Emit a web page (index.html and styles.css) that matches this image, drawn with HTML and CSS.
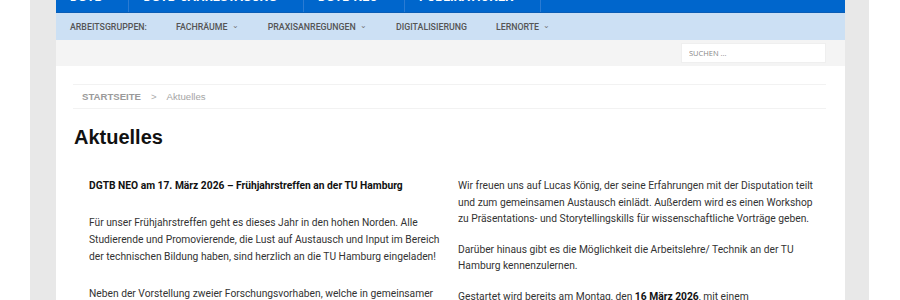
FILE: index.html
```html
<!DOCTYPE html>
<html lang="de">
<head>
  <meta charset="UTF-8" />
  <title>Aktuelles</title>
  <link rel="stylesheet" href="styles.css">
</head>
<body>

  <div class="wrapper">
    <div class="page">
      <!-- Hauptmenü -->
      <nav class="main-nav">
        <a class="main-item first">DGTB</a>
        <a class="main-item">DGTB-JAHRESTAGUNG</a>
        <a class="main-item">DGTB NEO</a>
        <a class="main-item">PUBLIKATIONEN</a>
      </nav>

      <!-- Arbeitsgruppen -->
      <nav class="sub-nav">
        <span class="sub-item label">ARBEITSGRUPPEN:</span>
        <span class="sub-item">FACHRÄUME <span class="caret">&#8964;</span></span>
        <span class="sub-item">PRAXISANREGUNGEN <span class="caret">&#8964;</span></span>
        <span class="sub-item">DIGITALISIERUNG</span>
        <span class="sub-item">LERNORTE <span class="caret">&#8964;</span></span>
      </nav>

      <div class="search-bar">
        <input class="search" type="text" placeholder="SUCHEN ...">
      </div>

      <div class="content">
        <div class="breadcrumb">
          <span class="crumb-home">STARTSEITE</span>
          <span class="crumb-sep">&gt;</span>
          <span class="crumb-current">Aktuelles</span>
        </div>

        <h1>Aktuelles</h1>

        <div class="columns">
          <div class="col col-left">
            <p><strong>DGTB NEO am 17. März 2026 – Frühjahrstreffen an der TU Hamburg</strong></p>
            <p>Für unser Frühjahrstreffen geht es dieses Jahr in den hohen Norden. Alle Studierende und Promovierende, die Lust auf Austausch und Input im Bereich der technischen Bildung haben, sind herzlich an die TU Hamburg eingeladen!</p>
            <p>Neben der Vorstellung zweier Forschungsvorhaben, welche in gemeinsamer Arbeit entstanden sind, gibt es viel Zeit zum Austausch.</p>
          </div>
          <div class="col col-right">
            <p>Wir freuen uns auf Lucas König, der seine Erfahrungen mit der Disputation teilt und zum gemeinsamen Austausch einlädt. Außerdem wird es einen Workshop zu Präsentations- und Storytellingskills für wissenschaftliche Vorträge geben.</p>
            <p>Darüber hinaus gibt es die Möglichkeit die Arbeitslehre/ Technik an der TU Hamburg kennenzulernen.</p>
            <p>Gestartet wird bereits am Montag, den <strong>16 März 2026</strong>, mit einem Willkommensabend in Hamburg.</p>
          </div>
        </div>
      </div>
    </div>
  </div>

</body>
</html>
```

FILE: styles.css
```css
* {
  box-sizing: border-box;
}
body {
  font-family: 'Roboto', 'Liberation Sans', sans-serif;
  margin: 0;
  padding: 0;
  background-color: #ffffff;
  overflow: hidden;
}
.wrapper {
  width: 839px;
  margin-left: 30px;
  padding: 0 24px 0 26px;
  background-color: #e8e8e8;
  height: 300px;
  overflow: hidden;
}
.page {
  background-color: #ffffff;
  height: 100%;
}

/* Hauptmenü (oben abgeschnitten) */
.main-nav {
  display: flex;
  height: 13px;
  background-color: #0066cc;
  border-bottom: 1px solid #0a5db5;
  overflow: hidden;
}
.main-item {
  display: block;
  margin-top: -11px;
  padding: 0 26px 0 14px;
  font-family: 'Roboto', sans-serif;
  font-size: 12.5px;
  font-weight: bold;
  line-height: 16px;
  color: #ffffff;
  border-right: 1px solid #2a7bd3;
  height: 30px;
}

/* Arbeitsgruppen */
.sub-nav {
  display: flex;
  align-items: center;
  height: 27px;
  padding-left: 14px;
  background-color: #cce0f4;
}
.sub-item {
  font-size: 8.8px;
  font-weight: 500;
  color: #555555;
  margin-right: 29px;
  white-space: nowrap;
}
.caret {
  font-size: 8px;
  position: relative;
  top: -2px;
  margin-left: 2px;
  color: #777777;
}

.search-bar {
  display: flex;
  justify-content: flex-end;
  align-items: center;
  height: 26px;
  padding-right: 19px;
  background-color: #f4f4f4;
}
.search {
  width: 145px;
  height: 20px;
  border: 1px solid #efefef;
  background-color: #ffffff;
  padding: 0 7px;
  font-family: 'Open Sans', sans-serif;
  font-size: 7.5px;
  outline: none;
}
.search::placeholder {
  color: #888888;
}

.content {
  padding: 18px 19px 0 17px;
}
.breadcrumb {
  height: 25px;
  border-top: 1px solid #f2f2f2;
  border-bottom: 1px solid #f2f2f2;
  padding-left: 9px;
  display: flex;
  align-items: center;
  font-family: 'Liberation Sans', Arial, sans-serif;
  font-size: 9.6px;
}
.crumb-home {
  font-weight: bold;
  color: #9a9a9a;
}
.crumb-sep {
  color: #aaaaaa;
  margin: 0 10px;
}
.crumb-current {
  color: #a5a5a5;
}

h1 {
  margin: 16px 0 0 1px;
  font-family: 'Liberation Sans', Arial, sans-serif;
  font-size: 20px;
  font-weight: bold;
  color: #111111;
  line-height: 24px;
}

.columns {
  display: grid;
  grid-template-columns: 353px 362px;
  gap: 16px;
  padding: 0 0 0 16px;
  margin-top: 29px;
  font-size: 10.25px;
  line-height: 16.7px;
  color: #333333;
}
.col p {
  margin: 0;
}
.col strong {
  color: #111111;
}
.col-left p {
  margin-bottom: 20.5px;
}
.col-right p {
  margin-bottom: 13.5px;
}
```
